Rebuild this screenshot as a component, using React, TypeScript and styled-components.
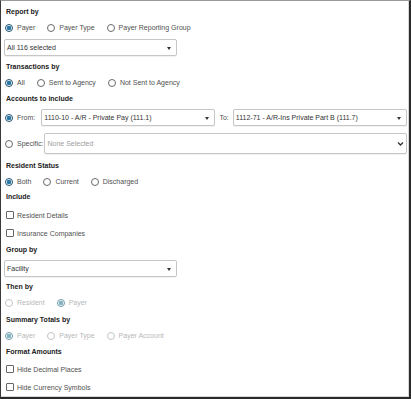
import React from "react";
import styled, { createGlobalStyle } from "styled-components";

const Global = createGlobalStyle`
  html, body { margin: 0; padding: 0; background: #fff; }
  body { font-family: "Liberation Sans", Arial, sans-serif; }
  * { box-sizing: border-box; }
`;

const Frame = styled.div`
  width: 411px;
  height: 399px;
  border-top: 1px solid #9a9a9a;
  border-left: 1px solid #3a3a3a;
  border-right: 2px solid #2a2a2a;
  border-bottom: 2px solid #2a2a2a;
  box-shadow: inset -1px -1px 0 #d8d8d8;
  padding: 3px 2px 0 3px;
  display: flex;
  flex-direction: column;
  font-family: "Liberation Sans", Arial, sans-serif;
  font-size: 7px;
  color: #444;
`;

const Label = styled.div<{ $mt?: number }>`
  height: 16px;
  line-height: 16px;
  margin-top: ${(p) => p.$mt ?? 0}px;
  padding-left: 2px;
  font-weight: bold;
  color: #222;
`;

const RadioRow = styled.div`
  height: 15px;
  display: flex;
  align-items: center;
  gap: 12px;
  padding-left: 1px;
`;

const Option = styled.label<{ $disabled?: boolean }>`
  display: flex;
  align-items: center;
  gap: 4px;
  color: ${(p) => (p.$disabled ? "#b8b8b8" : "#505050")};
  white-space: nowrap;
`;

const Radio = styled.input.attrs({ type: "radio", readOnly: true })`
  appearance: none;
  margin: 0;
  width: 8px;
  height: 8px;
  border-radius: 50%;
  border: 1px solid #6a6a6a;
  background: #fff;
  flex: none;
  &:checked {
    border-color: #1f4f6a;
    background: radial-gradient(circle at center, #2a77a6 0 2px, #fff 2.6px);
  }
  &:disabled {
    border-color: #c4c4c4;
  }
  &:disabled:checked {
    border-color: #6d9aa8;
    background: radial-gradient(circle at center, #86b3c2 0 2px, #fff 2.6px);
  }
`;

const CheckRow = styled.label<{ $mt?: number }>`
  height: 18px;
  margin-top: ${(p) => p.$mt ?? 0}px;
  display: flex;
  align-items: center;
  gap: 3px;
  padding-left: 2px;
  color: #505050;
`;

const Check = styled.input.attrs({ type: "checkbox", readOnly: true })`
  appearance: none;
  margin: 0;
  width: 8px;
  height: 8px;
  border: 1px solid #666;
  border-radius: 1px;
  background: #fff;
  flex: none;
`;

const SelectBox = styled.div<{ $mt?: number; $height?: number }>`
  position: relative;
  width: 173px;
  height: ${(p) => p.$height ?? 17}px;
  margin-top: ${(p) => p.$mt ?? 0}px;
  border: 1px solid #c6c6c6;
  border-radius: 2px;
  background: #fff;
  box-shadow: 0 1px 1px rgba(0, 0, 0, 0.06);
  display: flex;
  align-items: center;
  padding: 0 14px 0 2px;
  color: #333;
  flex: none;
  white-space: nowrap;
  overflow: hidden;
`;

const FlexSelect = styled(SelectBox)<{ $ml?: number }>`
  flex: 1 1 0;
  width: auto;
  min-width: 0;
  margin-left: ${(p) => p.$ml ?? 0}px;
`;

const Placeholder = styled.span`
  color: #a0a0a0;
`;

const Caret = styled.span`
  position: absolute;
  right: 5px;
  top: 50%;
  margin-top: -1px;
  width: 0;
  height: 0;
  border-left: 2.5px solid transparent;
  border-right: 2.5px solid transparent;
  border-top: 3px solid #333;
`;

const Chevron = styled.svg`
  position: absolute;
  right: 2px;
  top: 50%;
  margin-top: -3px;
`;

const FieldRow = styled.div<{ $mt?: number; $h: number }>`
  height: ${(p) => p.$h}px;
  margin-top: ${(p) => p.$mt ?? 0}px;
  display: flex;
  align-items: center;
  padding-left: 1px;
`;

const InlineText = styled.span`
  margin: 0 4px;
  color: #505050;
  white-space: nowrap;
`;

const Select = ({ children, mt }: { children: React.ReactNode; mt?: number }) => (
  <SelectBox $mt={mt}>
    {children}
    <Caret />
  </SelectBox>
);

export default function App() {
  return (
    <>
      <Global />
      <Frame>
        <Label>Report by</Label>
        <RadioRow>
          <Option><Radio name="rb" defaultChecked />Payer</Option>
          <Option><Radio name="rb" />Payer Type</Option>
          <Option><Radio name="rb" />Payer Reporting Group</Option>
        </RadioRow>
        <Select mt={4}>All 116 selected</Select>

        <Label $mt={3}>Transactions by</Label>
        <RadioRow>
          <Option><Radio name="tb" defaultChecked />All</Option>
          <Option><Radio name="tb" />Sent to Agency</Option>
          <Option><Radio name="tb" />Not Sent to Agency</Option>
        </RadioRow>

        <Label $mt={1}>Accounts to include</Label>
        <FieldRow $mt={2} $h={17}>
          <Option><Radio name="ai" defaultChecked />From:</Option>
          <FlexSelect $ml={6}>
            1110-10 - A/R - Private Pay (111.1)
            <Caret />
          </FlexSelect>
          <InlineText>To:</InlineText>
          <FlexSelect>
            1112-71 - A/R-Ins Private Part B (111.7)
            <Caret />
          </FlexSelect>
        </FieldRow>
        <FieldRow $mt={7} $h={21}>
          <Option><Radio name="ai" />Specific:</Option>
          <FlexSelect $height={21} $ml={1}>
            <Placeholder>None Selected</Placeholder>
            <Chevron width="7" height="6" viewBox="0 0 7 6">
              <path d="M1 1.5 L3.5 4 L6 1.5" fill="none" stroke="#333" strokeWidth="1.3" />
            </Chevron>
          </FlexSelect>
        </FieldRow>

        <Label $mt={4}>Resident Status</Label>
        <RadioRow>
          <Option><Radio name="rs" defaultChecked />Both</Option>
          <Option><Radio name="rs" />Current</Option>
          <Option><Radio name="rs" />Discharged</Option>
        </RadioRow>

        <Label>Include</Label>
        <CheckRow $mt={1}><Check />Resident Details</CheckRow>
        <CheckRow><Check />Insurance Companies</CheckRow>

        <Label>Group by</Label>
        <Select mt={2}>Facility</Select>

        <Label $mt={2}>Then by</Label>
        <RadioRow>
          <Option $disabled><Radio name="tby" disabled />Resident</Option>
          <Option $disabled><Radio name="tby" disabled defaultChecked />Payer</Option>
        </RadioRow>

        <Label $mt={2}>Summary Totals by</Label>
        <RadioRow>
          <Option $disabled><Radio name="st" disabled defaultChecked />Payer</Option>
          <Option $disabled><Radio name="st" disabled />Payer Type</Option>
          <Option $disabled><Radio name="st" disabled />Payer Account</Option>
        </RadioRow>

        <Label $mt={1}>Format Amounts</Label>
        <CheckRow><Check />Hide Decimal Places</CheckRow>
        <CheckRow><Check />Hide Currency Symbols</CheckRow>
      </Frame>
    </>
  );
}
